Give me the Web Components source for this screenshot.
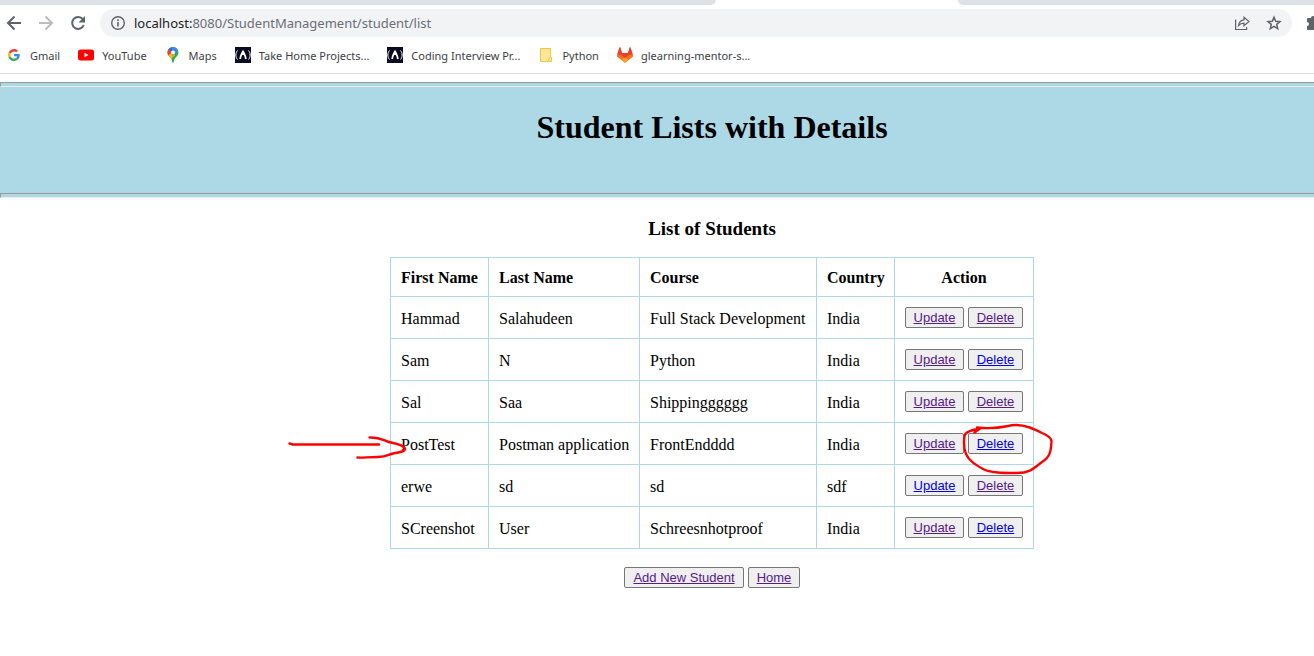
<!DOCTYPE html>
<html lang="en">
<head>
<meta charset="utf-8">
<title>Student Management</title>
<style>
html { background: #fff; }
body { margin: 0; overflow: hidden; font-family: "Liberation Serif", "Times New Roman", serif; font-size: 16px; color: #000; }
</style>
</head>
<body>
<browser-toolbar>
  <bookmark-item label="Gmail"><svg slot="icon" width="12" height="12" viewBox="0 0 48 48"><path fill="#ea4335" d="M24 9.500c3.500 0 6.700 1.200 9.200 3.600l6.900-6.900C35.900 2.400 30.500 0 24 0 14.600 0 6.500 5.400 2.600 13.200l8 6.200C12.400 13.700 17.700 9.500 24 9.500z"/><path fill="#4285f4" d="M47 24.500c0-1.600-.2-3.100-.4-4.500H24v9h12.900c-.6 3-2.300 5.500-4.800 7.200l7.700 6C44.400 38 47 31.800 47 24.500z"/><path fill="#fbbc05" d="M10.500 28.600A14.500 14.500 0 0 1 10.500 19.400l-8-6.200a24 24 0 0 0 0 21.600z"/><path fill="#34a853" d="M24 48c6.500 0 11.900-2.100 15.900-5.800l-7.700-6c-2.200 1.500-4.900 2.300-8.200 2.300-6.300 0-11.600-4.200-13.500-9.900l-8 6.200C6.500 42.600 14.600 48 24 48z"/></svg></bookmark-item>
  <bookmark-item label="YouTube"><svg slot="icon" width="16" height="16" viewBox="0 0 16 16"><rect y="2.500" width="16" height="11" rx="2.500" fill="#f00"/><path d="M6.500 5.700v4.600l4-2.300z" fill="#fff"/></svg></bookmark-item>
  <bookmark-item label="Maps"><svg slot="icon" width="16" height="16" viewBox="0 0 16 16"><defs><clipPath id="pin"><path d="M8 0a5.500 5.500 0 0 0-5.500 5.600C2.500 9.500 7 10.500 7.300 15c.1 1.300 1.300 1.300 1.400 0C9 10.500 13.500 9.500 13.500 5.600A5.500 5.500 0 0 0 8 0z"/></clipPath></defs><g clip-path="url(#pin)"><path fill="#34a853" d="M0 0h16v16H0z"/><path fill="#fbbc04" d="M2 8l4-3 4 3-5 5z"/><path fill="#ea4335" d="M0 0h6l2 4-5 4H0z"/><path fill="#1a73e8" d="M5 0h4L6 6 2 3z"/><path fill="#4285f4" d="M7 0h7v3L7 9z"/><path fill="#ea4335" d="M2 1l5 4-4 4z"/></g><circle cx="8" cy="5.600" r="2" fill="#fff"/></svg></bookmark-item>
  <bookmark-item label="Take Home Projects..."><svg slot="icon" width="16" height="16" viewBox="0 0 16 16"><path fill="#0a0a23" d="M0 0h16v16H0z"/><g fill="none" stroke="#fff" stroke-width="1"><path d="M2.500 3.500C.3 6 .3 10 2.500 12.500M13.500 3.500c2.200 2.500 2.200 6.500 0 9"/></g><path fill="none" stroke="#fff" stroke-width="1.800" d="M8 3.500C8 5.500 5.200 8 5.200 12M8 3.500C8 5.500 10.800 8 10.800 12M8 4v4"/></svg></bookmark-item>
  <bookmark-item label="Coding Interview Pr..."><svg slot="icon" width="16" height="16" viewBox="0 0 16 16"><path fill="#0a0a23" d="M0 0h16v16H0z"/><g fill="none" stroke="#fff" stroke-width="1"><path d="M2.500 3.500C.3 6 .3 10 2.500 12.500M13.500 3.500c2.200 2.500 2.200 6.500 0 9"/></g><path fill="none" stroke="#fff" stroke-width="1.800" d="M8 3.500C8 5.500 5.200 8 5.200 12M8 3.500C8 5.500 10.800 8 10.800 12M8 4v4"/></svg></bookmark-item>
  <bookmark-item label="Python"><svg slot="icon" width="16" height="16" viewBox="0 0 16 16"><path fill="#ffe695" stroke="#e8c94c" d="M2.500 1.500h10v9h1v4h-11z"/><path fill="none" stroke="#e8c94c" d="M12.500 10.500l-2 1.500v2.500"/></svg></bookmark-item>
  <bookmark-item label="glearning-mentor-s..."><svg slot="icon" width="16" height="16" viewBox="0 0 16 16"><path fill="#fc6d26" d="M2.500 .5L0 8.500c-.2.700 0 1.200.5 1.600L8 15.700l7.500-5.600c.5-.4.700-.9.500-1.600L13.500.5c-.2-.4-.6-.4-.8 0L11 6H5L3.300.5C3.100.1 2.700.1 2.500.5z"/><path fill="#e24329" d="M2.500.5L.3 7.300 5 8.500l3 3 3-3 4.700-1.200L13.500.5c-.2-.4-.6-.4-.8 0L11 6H5L3.300.5C3.100.1 2.700.1 2.500.5z"/><path fill="#fca326" d="M8 10.500l-3.500 2.600L8 15.700l3.500-2.600z"/></svg></bookmark-item>
</browser-toolbar>
<page-banner>Student Lists with Details</page-banner>
<student-list></student-list>

<script>
class BookmarkItem extends HTMLElement {
  constructor() {
    super();
    this.attachShadow({ mode: 'open' }).innerHTML = `
      <style>
        :host { display: block; flex: none; }
        a { display: flex; align-items: center; gap: 8px; height: 24px; color: #3c4043; text-decoration: none; white-space: nowrap; }
        .icon { display: flex; flex: none; width: 16px; justify-content: center; }
      </style>
      <a href="#"><span class="icon"><slot name="icon"></slot></span><span>${this.getAttribute('label')}</span></a>`;
  }
}

class BrowserToolbar extends HTMLElement {
  constructor() {
    super();
    this.attachShadow({ mode: 'open' }).innerHTML = `
      <style>
        :host { display: block; border-bottom: 1px solid #dadce0; font-family: "Noto Sans", "Open Sans", sans-serif; font-size: 11px; color: #3c4043; }
        .tabs { display: flex; height: 5px; justify-content: space-between; }
        .tabs span { background: #dee1e6; }
        .before { flex: none; width: 716px; border-bottom-right-radius: 6px; }
        .after { width: calc(100% - 958px); border-bottom-left-radius: 6px; }
        .nav { display: flex; align-items: center; height: 36px; padding-left: 6px; gap: 16px; }
        button { display: flex; flex: none; padding: 0; border: 0; background: none; }
        .address { display: flex; flex: 1; min-width: 0; align-items: center; gap: 8px; height: 28px; margin: 0 -2px; padding: 0 10px; border-radius: 14px; background: #f1f3f4; }
        .url { flex: 1; min-width: 0; color: #6b6f74; font-size: 13px; white-space: nowrap; }
        .url b { color: #202124; font-weight: normal; }
        .tools { display: flex; gap: 16px; }
        .ext { margin-right: -8px; }
        .bookmarks { display: flex; gap: 18px; align-items: center; height: 28px; padding: 0 0 4px 6px; overflow: hidden; }
      </style>
      <div class="tabs"><span class="before"></span><span class="after"></span></div>
      <div class="nav">
        <button aria-label="Back"><svg width="16" height="16" viewBox="0 0 16 16" fill="none" stroke="#5f6368" stroke-width="2"><path d="M15 8H2.500M8.500 1.500L2 8l6.500 6.500"/></svg></button>
        <button aria-label="Forward"><svg width="16" height="16" viewBox="0 0 16 16" fill="none" stroke="#babcbe" stroke-width="2"><path d="M1 8h12.500M7.500 1.500L14 8l-6.500 6.500"/></svg></button>
        <button aria-label="Reload"><svg width="16" height="16" viewBox="0 0 16 16"><path fill="none" stroke="#5f6368" stroke-width="2" d="M12.900 4.200A6 6 0 1 0 13.800 10"/><path fill="#5f6368" d="M15 1v6.500H8.500z"/></svg></button>
        <div class="address">
          <svg width="16" height="16" viewBox="0 0 16 16"><circle cx="8" cy="8" r="6.300" fill="none" stroke="#5f6368" stroke-width="1.400"/><path fill="#5f6368" d="M7.200 7h1.600v4.500H7.200zM7.200 4.300h1.600v1.600H7.200z"/></svg>
          <span class="url"><b>localhost:</b>8080/StudentManagement/student/list</span>
          <div class="tools">
            <button aria-label="Share"><svg width="16" height="16" viewBox="0 0 16 16" fill="none" stroke="#5f6368" stroke-width="1.200"><path d="M1.600 4.500v10h11v-2.500M4.500 10.500C5 7 7 5 10 4.800V2.200l5 4.300-5 4.200V8.200c-2.500 0-4 .6-5.500 2.300z"/></svg></button>
            <button aria-label="Bookmark this page"><svg width="16" height="16" viewBox="0 0 16 16" fill="none" stroke="#5f6368" stroke-width="1.500"><path d="M8 2.200l1.700 4 4.300.4-3.300 2.800 1 4.300L8 11.400l-3.700 2.300 1-4.300L2 6.600l4.300-.4z"/></svg></button>
          </div>
        </div>
        <button class="ext" aria-label="Extensions"><svg width="16" height="16" viewBox="0 0 16 16"><path fill="#5f6368" d="M1 4.200C1 3.500 1.500 3 2.200 3H5a2 2 0 1 1 4 0h3c.6 0 1 .5 1 1.200V7a2 2 0 1 1 0 4v3c0 .6-.5 1-1 1H2.200c-.7 0-1.200-.4-1.200-1v-3a2 2 0 0 0 0-4z"/></svg></button>
      </div>
      <div class="bookmarks"><slot></slot></div>`;
  }
}

class PageBanner extends HTMLElement {
  constructor() {
    super();
    this.attachShadow({ mode: 'open' }).innerHTML = `
      <style>
        :host { display: block; margin-top: 8px; background: #add8e6; }
        hr { height: 3px; margin: 0; border: 1px solid; border-color: #9a9a9a #eee #eee #9a9a9a; border-right: 0; }
        h1 { margin: 0; padding: 22px 0 47px 110px; font-size: 32px; line-height: 37px; text-align: center; }
      </style>
      <hr><h1><slot></slot></h1><hr>`;
  }
}

class ActionButton extends HTMLElement {
  constructor() {
    super();
    this.attachShadow({ mode: 'open' }).innerHTML = `
      <style>
        :host { display: block; }
        button { display: block; height: 21px; padding: 0 7px; border: 1px solid #767676; border-radius: 2px; background: #efefef; font: 13px/19px "Liberation Sans", Arial, sans-serif; width: 100%; white-space: nowrap; }
        a { color: #551a8b; }
        :host([fresh]) a { color: #00e; }
      </style>
      <button type="button"><a href="#"><slot></slot></a></button>`;
  }
}

class PenMark extends HTMLElement {
  constructor() {
    super();
    const arrow = this.getAttribute('kind') === 'arrow';
    this.attachShadow({ mode: 'open' }).innerHTML = `
      <style>
        :host { position: absolute; pointer-events: none; }
        :host([kind="arrow"]) { left: -104px; top: 176px; }
        :host([kind="circle"]) { right: -22px; top: 164px; }
        svg { display: block; }
      </style>
      ${arrow
        ? '<svg width="122" height="30" viewBox="0 0 122 30" fill="none" stroke="#f00" stroke-width="2.400" stroke-linecap="round" stroke-linejoin="round"><path d="M3.500 10.500L7 11.500H93M83.500 4.500C95 4 98 8 105 9.500S118 13 119 15.500C119 19 112 19.500 107 20.500S101 24 92 24 75 25 71.500 24.500"/></svg>'
        : '<svg width="96" height="56" viewBox="0 0 96 56" fill="none" stroke="#f00" stroke-width="2.400" stroke-linecap="round" stroke-linejoin="round"><path d="M14.500 11.500L20 7.500C11 9 5 11 4.500 15S3 26 6 33C9 40 16 44 23 48S43 52 57 52 75 46 82 41C91 36 91 28 91.500 20 91 16 87 14 82 12 74 8 66 4 56 4S42 9 17 6.500"/></svg>'}`;
  }
}

class StudentList extends HTMLElement {
  constructor() {
    super();
    const students = [
      ['Hammad', 'Salahudeen', 'Full Stack Development', 'India', '', ''],
      ['Sam', 'N', 'Python', 'India', '', 'fresh'],
      ['Sal', 'Saa', 'Shippingggggg', 'India', '', ''],
      ['PostTest', 'Postman application', 'FrontEndddd', 'India', '', 'fresh'],
      ['erwe', 'sd', 'sd', 'sdf', 'fresh', ''],
      ['SCreenshot', 'User', 'Schreesnhotproof', 'India', '', 'fresh'],
    ];
    const rows = students.map(([first, last, course, country, update, del]) => `
      <tr><td>${first}</td><td>${last}</td><td>${course}</td><td>${country}</td>
      <td class="action"><div class="actions"><action-button class="update" ${update}>Update</action-button><action-button class="delete" ${del}>Delete</action-button></div></td></tr>`).join('');
    this.attachShadow({ mode: 'open' }).innerHTML = `
      <style>
        :host { display: flex; flex-direction: column; align-items: center; padding-left: 110px; }
        h3 { margin: 20px 0 17px; font-size: 19px; line-height: 22px; }
        .sheet { position: relative; }
        table { box-sizing: border-box; width: 644px; table-layout: fixed; border-collapse: collapse; line-height: 18px; }
        th, td { box-sizing: border-box; padding: 2px 10px 0; border: 1px solid #add8e6; text-align: left; white-space: nowrap; }
        th { height: 39px; }
        td { height: 42px; }
        .action { padding-top: 0; }
        th:last-child { text-align: center; }
        .first { width: 98px; } .last { width: 151px; } .course { width: 177px; } .country { width: 78px; }
        .actions, .footer { display: flex; gap: 4px; }
        .update { width: 59px; }
        .delete { width: 55px; }
        .footer { margin-top: 18px; }
        .add { width: 120px; }
        .home { width: 52px; }
      </style>
      <h3>List of Students</h3>
      <div class="sheet">
        <table>
          <colgroup><col class="first"><col class="last"><col class="course"><col class="country"><col></colgroup>
          <thead><tr><th>First Name</th><th>Last Name</th><th>Course</th><th>Country</th><th>Action</th></tr></thead>
          <tbody>${rows}</tbody>
        </table>
        <pen-mark kind="arrow"></pen-mark>
        <pen-mark kind="circle"></pen-mark>
      </div>
      <div class="footer"><action-button class="add">Add New Student</action-button><action-button class="home">Home</action-button></div>`;
  }
}

customElements.define('bookmark-item', BookmarkItem);
customElements.define('browser-toolbar', BrowserToolbar);
customElements.define('page-banner', PageBanner);
customElements.define('action-button', ActionButton);
customElements.define('pen-mark', PenMark);
customElements.define('student-list', StudentList);
</script>
</body>
</html>
